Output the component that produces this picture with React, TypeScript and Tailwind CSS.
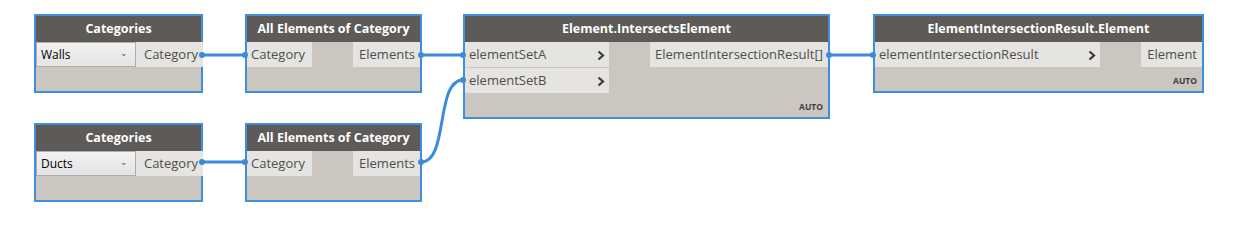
import React from "react";

type Port = { label: string; chevron?: boolean };

const FONT = { fontFamily: '"Open Sans", "Noto Sans", sans-serif' };

function Node({
  x,
  y,
  w,
  title,
  inputs,
  outputs,
  inW,
  outW,
  dropdown,
  auto,
  bodyH = 24,
}: {
  x: number;
  y: number;
  w: number;
  title: string;
  inputs: Port[];
  outputs: Port[];
  inW: number;
  outW: number;
  dropdown?: string;
  auto?: boolean;
  bodyH?: number;
}) {
  return (
    <div
      className="absolute border-2 border-[#3d8fdb] bg-[#cbc6c0]"
      style={{ left: x, top: y, width: w }}
    >
      <div className="h-[26px] bg-[#5d5a57] text-white text-[12.5px] font-bold flex items-center justify-center leading-none">
        {title}
      </div>
      <div className="flex justify-between">
        <div className="flex flex-col gap-px">
          {dropdown && (
            <div
              className="h-[25px] flex items-center justify-between pl-[4px] pr-[7px] border border-[#adadad] bg-gradient-to-b from-[#f2f2f2] to-[#e4e4e4] text-[12px] text-black"
              style={{ width: inW }}
            >
              <span>{dropdown}</span>
              <span className="text-[9px] text-[#555] -mt-1">⌄</span>
            </div>
          )}
          {inputs.map((p) => (
            <div
              key={p.label}
              className="h-[25px] bg-[#e5e4e1] flex items-center justify-between pl-[4px] pr-[4px] pt-px text-[13px] text-[#4e4e4e]"
              style={{ width: inW }}
            >
              <span>{p.label}</span>
              {p.chevron && (
                <svg width="8" height="11" viewBox="0 0 8 11">
                  <path d="M1.5 1.5 L6 5.5 L1.5 9.5" fill="none" stroke="#3b3b3b" strokeWidth="2.2" />
                </svg>
              )}
            </div>
          ))}
        </div>
        <div className="flex flex-col gap-px">
          {outputs.map((p) => (
            <div
              key={p.label}
              className="h-[25px] bg-[#e5e4e1] flex items-center justify-end pr-[5px] pt-px text-[13px] text-[#4e4e4e] whitespace-nowrap"
              style={{ width: outW }}
            >
              {p.label}
            </div>
          ))}
        </div>
      </div>
      <div className="relative" style={{ height: bodyH }}>
        {auto && (
          <span className="absolute right-[5px] bottom-[6px] text-[8.5px] font-bold text-[#3f3f3f] leading-none">
            AUTO
          </span>
        )}
      </div>
    </div>
  );
}

export default function App() {
  return (
    <div className="relative w-[1238px] h-[244px] bg-white overflow-hidden" style={FONT}>
      {/* wires */}
      <svg className="absolute inset-0" width="1238" height="244">
        <g stroke="#3a8cdb" strokeWidth="3" fill="none">
          <path d="M202 55 L245 55" />
          <path d="M421 55 L463 55" />
          <path d="M829 55 L873 55" />
          <path d="M202 162 L245 162" />
          <path d="M421 162 C449 162 435 80 463 80" />
        </g>
      </svg>

      <Node
        x={34}
        y={14}
        w={169}
        title="Categories"
        dropdown="Walls"
        inputs={[]}
        outputs={[{ label: "Category" }]}
        inW={100}
        outW={67}
      />
      <Node
        x={245}
        y={14}
        w={177}
        title="All Elements of Category"
        inputs={[{ label: "Category" }]}
        outputs={[{ label: "Elements" }]}
        inW={65}
        outW={67}
      />
      <Node
        x={463}
        y={14}
        w={367}
        title="Element.IntersectsElement"
        inputs={[
          { label: "elementSetA", chevron: true },
          { label: "elementSetB", chevron: true },
        ]}
        outputs={[{ label: "ElementIntersectionResult[]" }]}
        inW={144}
        outW={178}
        auto
      />
      <Node
        x={873}
        y={14}
        w={331}
        title="ElementIntersectionResult.Element"
        inputs={[{ label: "elementIntersectionResult", chevron: true }]}
        outputs={[{ label: "Element" }]}
        inW={225}
        outW={61}
        auto
      />
      <Node
        x={34}
        y={123}
        w={169}
        title="Categories"
        dropdown="Ducts"
        inputs={[]}
        outputs={[{ label: "Category" }]}
        inW={100}
        outW={67}
      />
      <Node
        x={245}
        y={123}
        w={177}
        title="All Elements of Category"
        inputs={[{ label: "Category" }]}
        outputs={[{ label: "Elements" }]}
        inW={65}
        outW={67}
      />

      {/* port bumps */}
      <svg className="absolute inset-0 pointer-events-none" width="1238" height="244">
        <g fill="#3a8cdb">
          {[
            [202, 55],
            [245, 55],
            [421, 55],
            [463, 55],
            [463, 80],
            [829, 55],
            [873, 55],
            [202, 162],
            [245, 162],
            [421, 162],
          ].map(([cx, cy]) => (
            <circle key={`${cx}-${cy}`} cx={cx} cy={cy} r="3" />
          ))}
        </g>
      </svg>
    </div>
  );
}
